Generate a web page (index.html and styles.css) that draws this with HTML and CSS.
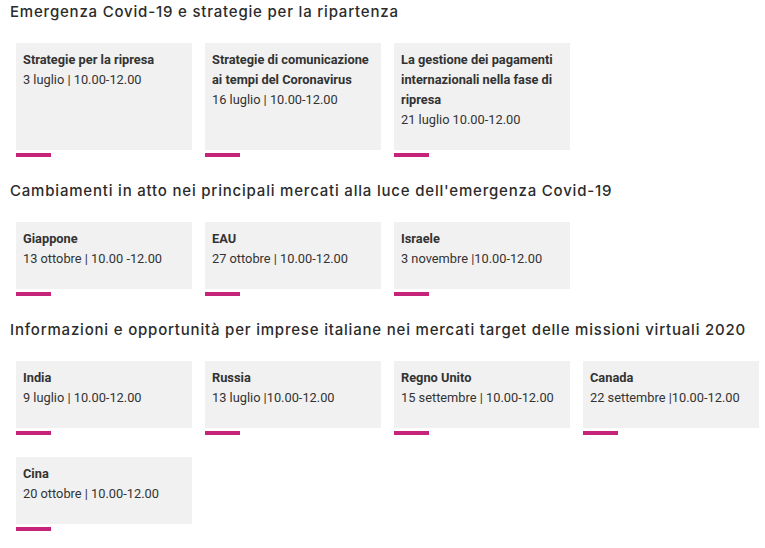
FILE: index.html
```html
<!DOCTYPE html>
<html lang="it">
<head>
  <meta charset="UTF-8">
  <title>Webinar</title>
  <link rel="stylesheet" href="styles.css">
</head>
<body>
  <div class="container">
    <h2 class="section-title">Emergenza Covid-19 e strategie per la ripartenza</h2>
    <div class="cards">
      <div class="item">
        <div class="card">
          <div class="card-title">Strategie per la ripresa</div>
          <div class="card-date">3 luglio | 10.00-12.00</div>
        </div>
        <div class="bar"></div>
      </div>
      <div class="item">
        <div class="card">
          <div class="card-title">Strategie di comunicazione ai tempi del Coronavirus</div>
          <div class="card-date">16 luglio | 10.00-12.00</div>
        </div>
        <div class="bar"></div>
      </div>
      <div class="item">
        <div class="card">
          <div class="card-title">La gestione dei pagamenti internazionali nella fase di ripresa</div>
          <div class="card-date">21 luglio 10.00-12.00</div>
        </div>
        <div class="bar"></div>
      </div>
    </div>

    <h2 class="section-title">Cambiamenti in atto nei principali mercati alla luce dell'emergenza Covid-19</h2>
    <div class="cards">
      <div class="item">
        <div class="card">
          <div class="card-title">Giappone</div>
          <div class="card-date">13 ottobre | 10.00 -12.00</div>
        </div>
        <div class="bar"></div>
      </div>
      <div class="item">
        <div class="card">
          <div class="card-title">EAU</div>
          <div class="card-date">27 ottobre | 10.00-12.00</div>
        </div>
        <div class="bar"></div>
      </div>
      <div class="item">
        <div class="card">
          <div class="card-title">Israele</div>
          <div class="card-date">3 novembre |10.00-12.00</div>
        </div>
        <div class="bar"></div>
      </div>
    </div>

    <h2 class="section-title">Informazioni e opportunità per imprese italiane nei mercati target delle missioni virtuali 2020</h2>
    <div class="cards">
      <div class="item">
        <div class="card">
          <div class="card-title">India</div>
          <div class="card-date">9 luglio | 10.00-12.00</div>
        </div>
        <div class="bar"></div>
      </div>
      <div class="item">
        <div class="card">
          <div class="card-title">Russia</div>
          <div class="card-date">13 luglio |10.00-12.00</div>
        </div>
        <div class="bar"></div>
      </div>
      <div class="item">
        <div class="card">
          <div class="card-title">Regno Unito</div>
          <div class="card-date">15 settembre | 10.00-12.00</div>
        </div>
        <div class="bar"></div>
      </div>
      <div class="item">
        <div class="card">
          <div class="card-title">Canada</div>
          <div class="card-date">22 settembre |10.00-12.00</div>
        </div>
        <div class="bar"></div>
      </div>
      <div class="item">
        <div class="card">
          <div class="card-title">Cina</div>
          <div class="card-date">20 ottobre | 10.00-12.00</div>
        </div>
        <div class="bar"></div>
      </div>
    </div>
  </div>
</body>
</html>
```

FILE: styles.css
```css
body {
  margin: 0;
  padding: 0;
  background: #fff;
  color: #333;
  font-family: Roboto, "Liberation Sans", sans-serif;
}
.container {
  padding: 0 0 0 10px;
}
.section-title {
  margin: 0 0 19px 0;
  font-family: Inter, "Open Sans", sans-serif;
  font-weight: 500;
  font-size: 15px;
  line-height: 24px;
  letter-spacing: 0.8px;
  color: #2b2b2b;
}
.cards {
  display: flex;
  flex-wrap: wrap;
  column-gap: 13px;
  padding-left: 6px;
}
.item {
  width: 176px;
  display: flex;
  flex-direction: column;
  margin-bottom: 22px;
}
.card {
  flex: 1;
  background: #f1f1f1;
  padding: 7px 7px 20px 7px;
  font-size: 12.8px;
  line-height: 20px;
}
.card-title {
  font-weight: bold;
}
.bar {
  width: 35px;
  height: 4px;
  margin-top: 3px;
  background: #c6237a;
}
```
